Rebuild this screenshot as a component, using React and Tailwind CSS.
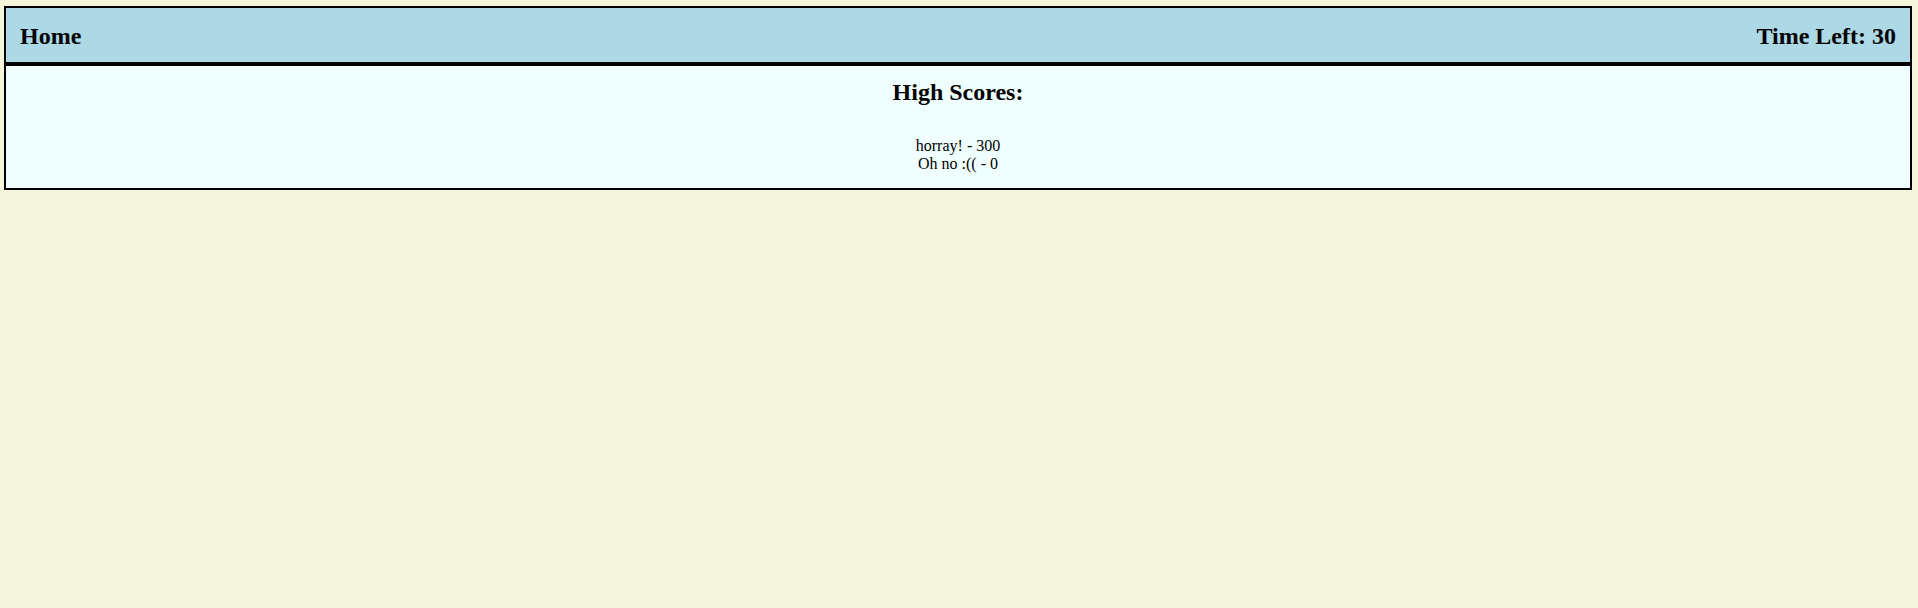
const scores = [
  { name: "horray!", score: 300 },
  { name: "Oh no :((", score: 0 },
];

const App = () => {
  return (
    <div className="min-h-screen bg-[#f5f5dc] pt-1.5 pl-1 pr-1.5 font-['Liberation_Serif',serif] text-black leading-[normal]">
      <div className="border-2 border-black bg-[#add8e6] h-[58px] pt-[2px] px-[14px] flex items-center justify-between">
        <h2 className="text-2xl leading-[normal] font-bold">Home</h2>
        <h2 className="text-2xl leading-[normal] font-bold">Time Left: 30</h2>
      </div>
      <div className="border-2 border-black bg-[#f0ffff] pt-[13px] pb-[15px] text-center">
        <h2 className="text-2xl leading-[normal] font-bold">High Scores:</h2>
        <div className="mt-[31px] text-base leading-[normal]">
          {scores.map((s, i) => (
            <div key={i}>
              {s.name} - {s.score}
            </div>
          ))}
        </div>
      </div>
    </div>
  );
};

export default App;
